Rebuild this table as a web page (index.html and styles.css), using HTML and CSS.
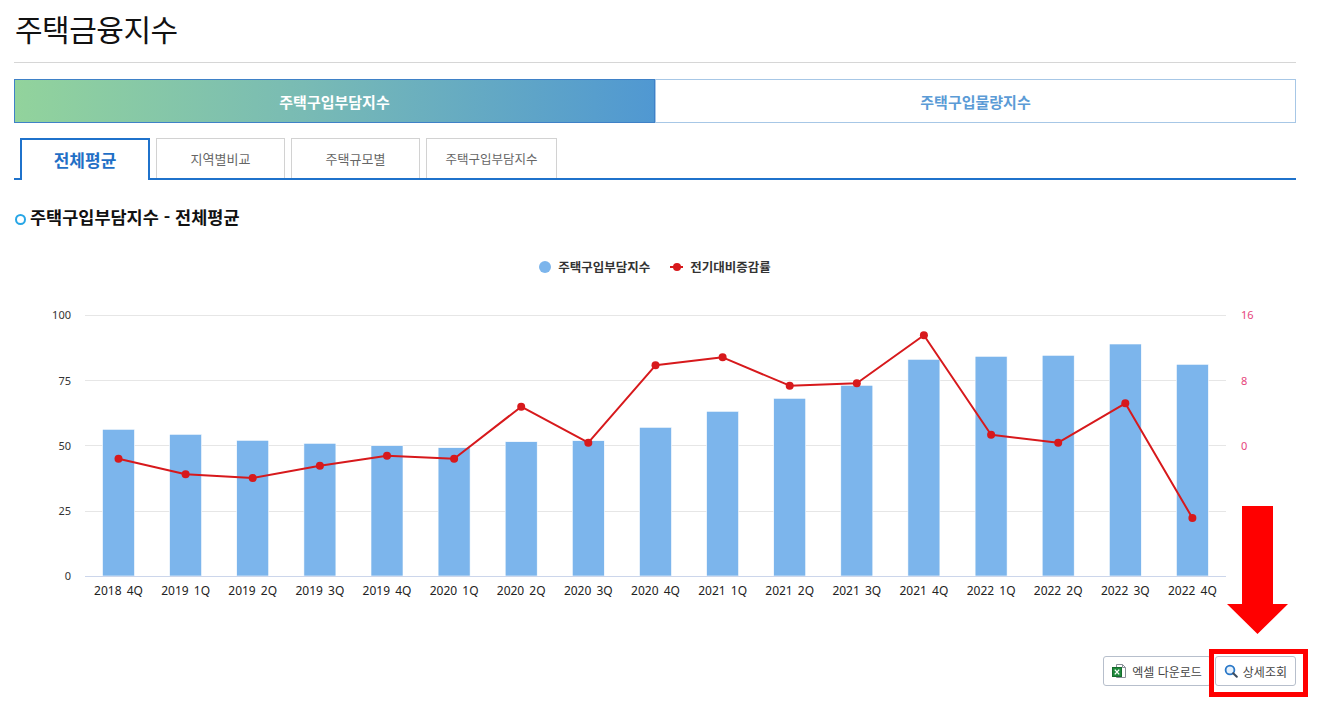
FILE: index.html
```html
<!DOCTYPE html>
<html lang="ko">
<head>
<meta charset="utf-8">
<title>주택금융지수</title>
<link rel="stylesheet" href="styles.css">
</head>
<body>
<div class="page">
  <h1 class="title">주택금융지수</h1>

  <div class="main-tabs">
    <a class="main-tab active">주택구입부담지수</a>
    <a class="main-tab">주택구입물량지수</a>
  </div>

  <div class="sub-tabs">
    <a class="sub-tab active">전체평균</a>
    <a class="sub-tab">지역별비교</a>
    <a class="sub-tab">주택규모별</a>
    <a class="sub-tab wide">주택구입부담지수</a>
  </div>

  <h2 class="section-title">주택구입부담지수 - 전체평균</h2>

  <div class="chart">
    <div class="legend">
      <span class="legend-item"><i class="sym-bar"></i>주택구입부담지수</span>
      <span class="legend-item"><i class="sym-line"></i>전기대비증감률</span>
    </div>
    <svg class="plot" width="1282" height="320" viewBox="14 290 1282 320">
      <g class="grid">
        <line x1="85" y1="315.5" x2="1226" y2="315.5"/>
        <line x1="85" y1="380.5" x2="1226" y2="380.5"/>
        <line x1="85" y1="445.5" x2="1226" y2="445.5"/>
        <line x1="85" y1="511.5" x2="1226" y2="511.5"/>
      </g>
      <g class="bars">
        <rect x="102.5" y="429.3" width="32" height="146.7"/>
        <rect x="169.6" y="434.3" width="32" height="141.7"/>
        <rect x="236.7" y="440.3" width="32" height="135.7"/>
        <rect x="303.9" y="443.3" width="32" height="132.7"/>
        <rect x="371.0" y="445.7" width="32" height="130.3"/>
        <rect x="438.1" y="447.7" width="32" height="128.3"/>
        <rect x="505.2" y="441.7" width="32" height="134.3"/>
        <rect x="572.3" y="440.7" width="32" height="135.3"/>
        <rect x="639.5" y="427.3" width="32" height="148.7"/>
        <rect x="706.6" y="411.3" width="32" height="164.7"/>
        <rect x="773.7" y="398.3" width="32" height="177.7"/>
        <rect x="840.8" y="385.3" width="32" height="190.7"/>
        <rect x="907.9" y="359.3" width="32" height="216.7"/>
        <rect x="975.1" y="356.3" width="32" height="219.7"/>
        <rect x="1042.2" y="355.3" width="32" height="220.7"/>
        <rect x="1109.3" y="344" width="32" height="232"/>
        <rect x="1176.4" y="364.3" width="32" height="211.7"/>
      </g>
      <line class="axis" x1="85" y1="576.5" x2="1226" y2="576.5"/>
      <polyline class="series" points="118.5,458.7 185.6,474.3 252.7,478 319.9,465.7 387.0,455.7 454.1,458.7 521.2,406.7 588.3,442.7 655.5,365.3 722.6,357.3 789.7,385.7 856.8,383.3 923.9,335.3 991.1,434.7 1058.2,442.7 1125.3,403.3 1192.4,518"/>
      <g class="markers">
        <circle cx="118.5" cy="458.7" r="4"/>
        <circle cx="185.6" cy="474.3" r="4"/>
        <circle cx="252.7" cy="478" r="4"/>
        <circle cx="319.9" cy="465.7" r="4"/>
        <circle cx="387.0" cy="455.7" r="4"/>
        <circle cx="454.1" cy="458.7" r="4"/>
        <circle cx="521.2" cy="406.7" r="4"/>
        <circle cx="588.3" cy="442.7" r="4"/>
        <circle cx="655.5" cy="365.3" r="4"/>
        <circle cx="722.6" cy="357.3" r="4"/>
        <circle cx="789.7" cy="385.7" r="4"/>
        <circle cx="856.8" cy="383.3" r="4"/>
        <circle cx="923.9" cy="335.3" r="4"/>
        <circle cx="991.1" cy="434.7" r="4"/>
        <circle cx="1058.2" cy="442.7" r="4"/>
        <circle cx="1125.3" cy="403.3" r="4"/>
        <circle cx="1192.4" cy="518" r="4"/>
      </g>
      <g class="ylabels">
        <text x="71" y="319">100</text>
        <text x="71" y="385">75</text>
        <text x="71" y="450">50</text>
        <text x="71" y="515">25</text>
        <text x="71" y="580">0</text>
      </g>
      <g class="ylabels-right">
        <text x="1241" y="319">16</text>
        <text x="1241" y="385">8</text>
        <text x="1241" y="450">0</text>
      </g>
      <g class="xlabels">
        <text x="118.5" y="595">2018 4Q</text>
        <text x="185.6" y="595">2019 1Q</text>
        <text x="252.7" y="595">2019 2Q</text>
        <text x="319.9" y="595">2019 3Q</text>
        <text x="387.0" y="595">2019 4Q</text>
        <text x="454.1" y="595">2020 1Q</text>
        <text x="521.2" y="595">2020 2Q</text>
        <text x="588.3" y="595">2020 3Q</text>
        <text x="655.5" y="595">2020 4Q</text>
        <text x="722.6" y="595">2021 1Q</text>
        <text x="789.7" y="595">2021 2Q</text>
        <text x="856.8" y="595">2021 3Q</text>
        <text x="923.9" y="595">2021 4Q</text>
        <text x="991.1" y="595">2022 1Q</text>
        <text x="1058.2" y="595">2022 2Q</text>
        <text x="1125.3" y="595">2022 3Q</text>
        <text x="1192.4" y="595">2022 4Q</text>
      </g>
    </svg>
  </div>

  <div class="actions">
    <button class="btn" type="button">
      <svg class="ico" width="15" height="16" viewBox="0 0 15 16">
        <path d="M4.5 1.5h6l3 3v10h-9z" fill="#fff" stroke="#8a8f99"/>
        <path d="M10.5 1.5v3h3" fill="none" stroke="#8a8f99"/>
        <rect x="0.5" y="4.5" width="9" height="9" fill="#1f8a3c" stroke="#166b2d"/>
        <path d="M2.8 6.6l4.4 4.8M7.2 6.6l-4.4 4.8" stroke="#fff" stroke-width="1.4"/>
      </svg>
      엑셀 다운로드
    </button>
    <button class="btn" type="button">
      <svg class="ico" width="14" height="14" viewBox="0 0 14 14">
        <circle cx="6" cy="6" r="4.4" fill="#e6f1fb" stroke="#2a78c8" stroke-width="1.8"/>
        <path d="M9.2 9.2l3.6 3.6" stroke="#3a4a5e" stroke-width="2" stroke-linecap="round"/>
      </svg>
      상세조회
    </button>
  </div>

  <svg class="callout-arrow" width="61" height="128" viewBox="0 0 61 128">
    <polygon points="15,0 46,0 46,98 61,98 30.5,128 0,98 15,98" fill="#ff0000"/>
  </svg>
  <div class="callout-box"></div>
</div>
</body>
</html>
```

FILE: styles.css
```css
* { box-sizing: border-box; }

body {
  margin: 0;
  background: #fff;
  color: #222;
  font-family: "Noto Sans CJK KR", "Noto Sans", sans-serif;
}

.page {
  position: relative;
  padding: 0 21px 0 14px;
  height: 706px;
}

.title {
  margin: 0;
  height: 63px;
  padding: 10px 0 0 1px;
  font-size: 30px;
  line-height: 36px;
  font-weight: 400;
  color: #111;
  border-bottom: 1px solid #d6d6d6;
  letter-spacing: -0.5px;
}

.main-tabs {
  display: flex;
  margin-top: 16px;
  height: 44px;
}

.main-tab {
  flex: 1;
  display: flex;
  align-items: center;
  justify-content: center;
  font-size: 15px;
  font-weight: 700;
  color: #5b9bd6;
  background: #fff;
  border: 1px solid #a7c7e6;
}

.main-tab.active {
  color: #fff;
  background: linear-gradient(90deg, #92d39c 0%, #79bbb4 45%, #5098d2 100%);
  border-color: #3f81c7;
}

.sub-tabs {
  display: flex;
  align-items: flex-start;
  gap: 6px;
  margin-top: 15px;
  padding-left: 6px;
  height: 42px;
  border-bottom: 2px solid #1f72cb;
}

.sub-tab {
  width: 129px;
  height: 40px;
  display: flex;
  align-items: center;
  justify-content: center;
  font-size: 13px;
  color: #666;
  background: #fff;
  border: 1px solid #d2d2d2;
  border-bottom: none;
}

.sub-tab.wide { width: 131px; font-size: 12.5px; }

.sub-tab.active {
  width: 130px;
  height: 42px;
  margin-bottom: -2px;
  padding-bottom: 2px;
  font-size: 17px;
  font-weight: 700;
  color: #1f6fc6;
  border: 2px solid #1f72cb;
  border-bottom: none;
}

.section-title {
  position: relative;
  margin: 27px 0 0;
  padding-left: 16px;
  font-size: 17.5px;
  line-height: 20px;
  font-weight: 700;
  color: #111;
}

.section-title::before {
  content: "";
  position: absolute;
  left: 1px;
  top: 7px;
  width: 7px;
  height: 7px;
  border: 2px solid #27a6e6;
  border-radius: 50%;
}

.legend {
  display: flex;
  justify-content: center;
  gap: 20px;
  margin-top: 32px;
  height: 16px;
  font-size: 12.5px;
  line-height: 16px;
  font-weight: 700;
  color: #333;
}

.legend-item {
  display: flex;
  align-items: center;
  gap: 7px;
}

.sym-bar {
  width: 12px;
  height: 12px;
  border-radius: 50%;
  background: #7cb5ec;
}

.sym-line {
  position: relative;
  width: 13px;
  height: 2px;
  background: #d7191c;
}

.sym-line::after {
  content: "";
  position: absolute;
  left: 2.5px;
  top: -3px;
  width: 8px;
  height: 8px;
  border-radius: 50%;
  background: #d7191c;
}

.plot {
  display: block;
  margin-top: 15px;
}

.grid line { stroke: #e6e6e6; stroke-width: 1; }
.axis { stroke: #ccd6eb; stroke-width: 1; }
.bars rect { fill: #7cb5ec; stroke: #fff; stroke-width: 0.6; }
.series { fill: none; stroke: #d7191c; stroke-width: 2; stroke-linejoin: round; }
.markers circle { fill: #d7191c; }

.ylabels text {
  font-family: "Noto Sans", sans-serif;
  font-size: 11px;
  fill: #333;
  text-anchor: end;
}

.ylabels-right text {
  font-family: "Noto Sans", sans-serif;
  font-size: 11px;
  fill: #e6457c;
}

.xlabels text {
  font-family: "Noto Sans", sans-serif;
  font-size: 12px;
  fill: #222;
  text-anchor: middle;
  word-spacing: 2px;
}

.actions {
  display: flex;
  justify-content: flex-end;
  gap: 4px;
  margin-top: 46px;
}

.btn {
  display: inline-flex;
  align-items: center;
  gap: 5px;
  height: 30px;
  padding: 0 8px;
  font-family: "Noto Sans CJK KR", sans-serif;
  font-size: 12px;
  color: #444;
  background: #fff;
  border: 1px solid #b7bfcc;
  border-radius: 3px;
}

.ico { display: block; }

.callout-arrow {
  position: absolute;
  left: 1227px;
  top: 506px;
}

.callout-box {
  position: absolute;
  left: 1209px;
  top: 649px;
  width: 99px;
  height: 48px;
  border: 5px solid #ff0000;
}
```
